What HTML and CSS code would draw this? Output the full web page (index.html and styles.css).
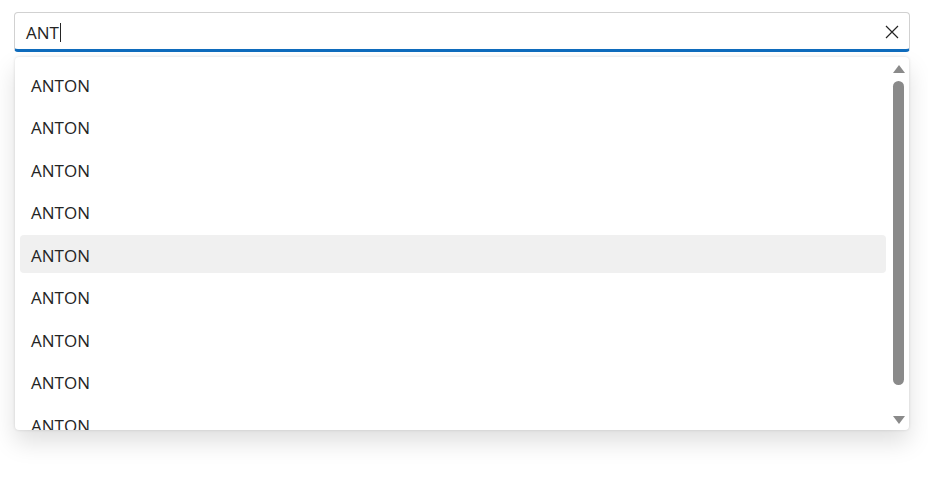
FILE: index.html
```html
<!DOCTYPE html>
<html lang="en">
<head>
  <meta charset="UTF-8" />
  <title>Combobox</title>
  <link rel="stylesheet" href="styles.css">
</head>
<body>
  <div class="combo">
    <div class="field">
      <span class="value">ANT</span><span class="caret"></span>
      <button class="clear" aria-label="Clear">
        <svg width="14" height="14" viewBox="0 0 14 14"><path d="M1 1L13 13M13 1L1 13" stroke="#242424" stroke-width="1.2" fill="none"/></svg>
      </button>
    </div>

    <div class="popup">
      <ul class="options">
        <li>ANTON</li>
        <li>ANTON</li>
        <li>ANTON</li>
        <li>ANTON</li>
        <li class="active">ANTON</li>
        <li>ANTON</li>
        <li>ANTON</li>
        <li>ANTON</li>
        <li>ANTON</li>
      </ul>
      <div class="scrollbar">
        <span class="arrow up"></span>
        <div class="track"><div class="thumb"></div></div>
        <span class="arrow down"></span>
      </div>
    </div>
  </div>
</body>
</html>
```

FILE: styles.css
```css
* { box-sizing: border-box; margin: 0; padding: 0; }
html, body { background: white; }
body { color: #242424; font-family: "Open Sans", "Liberation Sans", sans-serif; min-height: 482px; }

.combo { width: 896px; margin: 12px 0 0 14px; padding-bottom: 48px; }

.field {
  height: 40px;
  display: flex;
  align-items: center;
  padding: 0 10px 0 11px;
  border: 1px solid #d1d1d1;
  border-bottom: 3px solid #0f6cbd;
  border-radius: 4px;
  font-size: 17px;
}
.field .value { line-height: 20px; margin-top: 4px; }
.caret { width: 1px; height: 19px; background: #242424; margin: 3px 0 0 1px; }
.clear { margin-left: auto; border: none; background: none; display: flex; padding: 0; margin-top: 2px; }

.popup {
  margin: 5px 1px 0 1px;
  height: 373px;
  display: flex;
  border-radius: 4px;
  background: white;
  overflow: hidden;
  box-shadow: 0 12px 24px rgba(0,0,0,0.13), 0 0 3px rgba(0,0,0,0.14);
}

.options {
  flex: 1;
  list-style: none;
  padding: 8px 6px 0 5px;
  display: flex;
  flex-direction: column;
  gap: 4.45px;
}
.options li {
  flex: none;
  height: 38px;
  line-height: 38px;
  padding: 2px 0 0 11px;
  font-size: 17px;
  border-radius: 4px;
}
.options li.active { background: #f0f0f0; }

.scrollbar {
  width: 17px;
  display: flex;
  flex-direction: column;
  align-items: center;
  padding: 8px 4px 6px 0;
}
.arrow { width: 0; height: 0; border-left: 6.5px solid transparent; border-right: 6.5px solid transparent; }
.arrow.up { border-bottom: 8px solid #8a8a8a; }
.arrow.down { border-top: 8px solid #8a8a8a; }
.track { flex: 1; padding-top: 8px; }
.thumb { width: 11px; height: 304px; background: #8a8a8a; border-radius: 6px; }
```
